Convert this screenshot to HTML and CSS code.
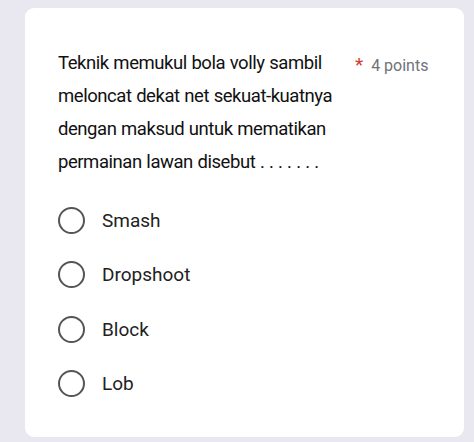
FILE: index.html
```html
<!DOCTYPE html>
<html>
<head>
<meta charset="utf-8">
<link rel="stylesheet" href="styles.css">
</head>
<body>
<div class="card">
  <div class="head">
    <div class="question">Teknik memukul bola volly sambil<br>meloncat dekat net sekuat-kuatnya<br>dengan maksud untuk mematikan<br>permainan lawan disebut . . . . . . .</div>
    <div class="points"><span class="req">*</span> 4 points</div>
  </div>
  <div class="options">
    <div class="opt"><span class="radio"></span><span class="label">Smash</span></div>
    <div class="opt"><span class="radio"></span><span class="label">Dropshoot</span></div>
    <div class="opt"><span class="radio"></span><span class="label">Block</span></div>
    <div class="opt"><span class="radio"></span><span class="label">Lob</span></div>
  </div>
</div>
</body>
</html>
```
FILE: styles.css
```css
html, body {
  margin: 0;
  padding: 0;
}
body {
  background: #e9e8f0;
  width: 474px;
  height: 442px;
  overflow: hidden;
  padding: 8px 10px 0 25px;
  box-sizing: border-box;
}
.card {
  background: #fff;
  border-radius: 9px;
  height: 429px;
  box-sizing: border-box;
  padding: 39px 0 0 33px;
}
.head {
  display: flex;
  align-items: flex-start;
}
.question {
  width: 297px;
  white-space: nowrap;
  font-family: Roboto, sans-serif;
  font-size: 18.5px;
  letter-spacing: -0.45px;
  word-spacing: 0.5px;
  line-height: 33px;
  color: #111;
}
.points {
  font-family: Roboto, sans-serif;
  font-size: 16px;
  color: #6f7378;
  margin-top: 6px;
  white-space: nowrap;
}
.req {
  color: #d5392b;
  font-size: 19px;
  margin-right: 4px;
}
.options {
  margin-top: 28px;
  display: flex;
  flex-direction: column;
  gap: 27.3px;
}
.opt {
  display: flex;
  align-items: center;
  height: 27px;
}
.radio {
  width: 27px;
  height: 27px;
  box-sizing: border-box;
  border: 2.5px solid #555;
  border-radius: 50%;
  margin-right: 17px;
}
.label {
  font-family: Roboto, sans-serif;
  font-size: 19px;
  color: #222;
}
```
